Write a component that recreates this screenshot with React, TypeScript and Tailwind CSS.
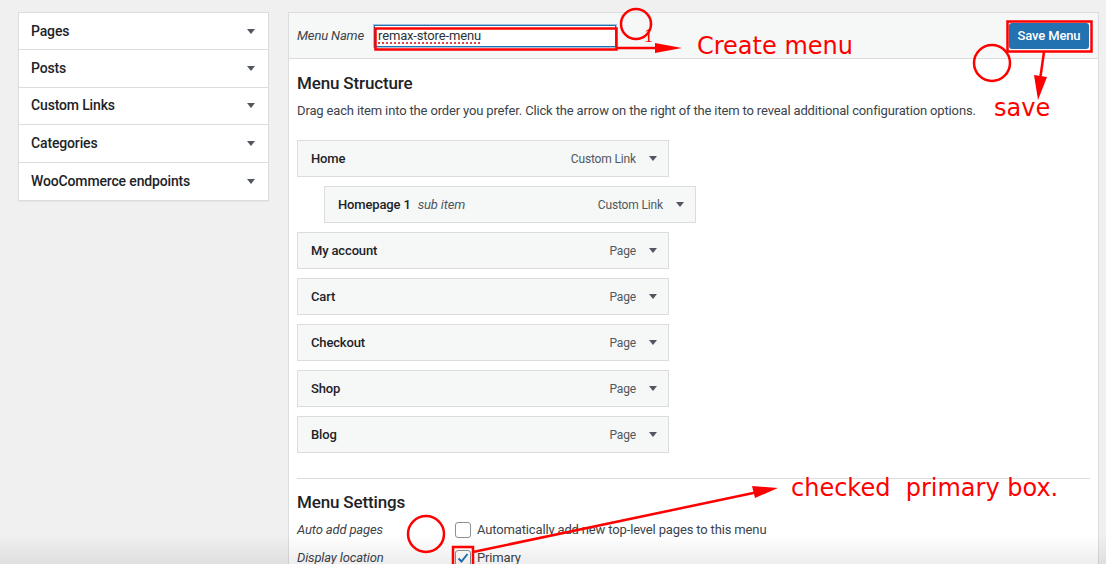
import React from "react";

const sections = ["Pages", "Posts", "Custom Links", "Categories", "WooCommerce endpoints"];

const items = [
  { title: "Home", type: "Custom Link" },
  { title: "Homepage 1", type: "Custom Link", sub: true },
  { title: "My account", type: "Page" },
  { title: "Cart", type: "Page" },
  { title: "Checkout", type: "Page" },
  { title: "Shop", type: "Page" },
  { title: "Blog", type: "Page" },
];

function Caret() {
  return (
    <svg width="8" height="5" viewBox="0 0 8 5" className="shrink-0">
      <polygon points="0,0 8,0 4,5" fill="#50575e" />
    </svg>
  );
}

function LeftPanel() {
  return (
    <div className="w-[251px] bg-white border border-[#dcdcde] shadow-[0_1px_1px_rgba(0,0,0,0.04)]">
      {sections.map((s, i) => (
        <div
          key={s}
          className={
            "h-[37.4px] flex items-center justify-between pl-[12px] pr-[13px] text-[14px] font-medium text-[#1d2327] " +
            (i < sections.length - 1 ? "border-b border-[#dcdcde]" : "")
          }
        >
          <span>{s}</span>
          <Caret />
        </div>
      ))}
    </div>
  );
}

function MenuItem({ title, type, sub }: { title: string; type: string; sub?: boolean }) {
  return (
    <div
      className={
        "w-[372px] h-[37px] flex items-center justify-between pl-[13px] pr-[11px] bg-[#f6f7f7] border border-[#dcdcde] " +
        (sub ? "ml-[27px]" : "")
      }
    >
      <div className="flex items-center gap-[7px]">
        <span className="text-[13px] font-medium text-[#1d2327]">{title}</span>
        {sub && <span className="text-[13px] italic text-[#50575e]">sub item</span>}
      </div>
      <div className="flex items-center gap-[13px]">
        <span className="text-[12px] text-[#50575e]">{type}</span>
        <Caret />
      </div>
    </div>
  );
}

function Checkbox({ checked }: { checked?: boolean }) {
  return (
    <span className="w-[16px] h-[16px] shrink-0 flex items-center justify-center bg-white border border-[#8c8f94] rounded-[3px]">
      {checked && (
        <svg width="14" height="14" viewBox="0 0 14 14">
          <path d="M2.5 7.5 L5.5 10.5 L11.5 3" fill="none" stroke="#2271b1" strokeWidth="2" />
        </svg>
      )}
    </span>
  );
}

function RightPanel() {
  return (
    <div className="w-[811px] h-[600px] bg-white border border-[#dcdcde]">
      {/* header */}
      <div className="h-[46px] flex items-center justify-between pl-[8px] pr-[9px] bg-[#f6f7f7] border-b border-[#dcdcde]">
        <div className="flex items-center">
          <span className="w-[77px] text-[13px] italic text-[#3c434a]">Menu Name</span>
          <div className="w-[242px] h-[22px] flex items-center px-[3px] bg-white border border-[#2271b1] shadow-[0_0_0_1px_rgba(34,113,177,0.4)]">
            <span className="text-[13px] text-[#2c3338] underline decoration-dotted decoration-[#e34040] decoration-[1.5px] underline-offset-[3px]">
              remax-store-menu
            </span>
          </div>
        </div>
        <button className="w-[80px] h-[26px] bg-[#2271b1] rounded-[3px] text-white text-[13px] font-medium">
          Save Menu
        </button>
      </div>

      {/* body */}
      <div className="px-[8px] pt-[14px]">
        <h3 className="text-[17px] leading-[20px] font-medium text-[#1d2327]">Menu Structure</h3>
        <p className="mt-[9px] text-[13px] leading-[18px] text-[#3c434a]">
          Drag each item into the order you prefer. Click the arrow on the right of the item to reveal additional
          configuration options.
        </p>
        <div className="mt-[20px] flex flex-col gap-[9px]">
          {items.map((it) => (
            <MenuItem key={it.title} {...it} />
          ))}
        </div>
        <div className="mt-[25px] border-t border-[#dcdcde]" />
        <h3 className="mt-[13px] text-[17px] leading-[20px] font-medium text-[#1d2327]">Menu Settings</h3>
        <div className="mt-[4px]">
          <div className="h-[28px] flex items-center">
            <span className="w-[158px] text-[13px] italic text-[#3c434a]">Auto add pages</span>
            <Checkbox />
            <span className="ml-[6px] text-[13px] text-[#3c434a]">
              Automatically add new top-level pages to this menu
            </span>
          </div>
          <div className="h-[28px] flex items-center">
            <span className="w-[158px] text-[13px] italic text-[#3c434a]">Display location</span>
            <Checkbox checked />
            <span className="ml-[6px] text-[13px] text-[#3c434a]">Primary</span>
          </div>
        </div>
      </div>
    </div>
  );
}

function Annotations() {
  const red = "#ff0000";
  const txt = { fontFamily: "'DejaVu Sans', sans-serif", fontSize: 24, fill: red, letterSpacing: 0 } as const;
  return (
    <svg className="absolute inset-0 pointer-events-none" width="1106" height="564" viewBox="0 0 1106 564">
      {/* input highlight + step 1 */}
      <rect x="375.5" y="28.5" width="241" height="21" fill="none" stroke={red} strokeWidth="2.5" />
      <circle cx="636" cy="24" r="15" fill="none" stroke={red} strokeWidth="2.5" />
      <text x="644" y="42" style={{ fontFamily: "'Liberation Serif', serif", fontSize: 18, fill: red, letterSpacing: 0 }}>1</text>
      <line x1="617" y1="48" x2="660" y2="48" stroke={red} strokeWidth="2.5" />
      <polygon points="655,43 682,48 655,53" fill={red} />
      <text x="697" y="54" style={txt}>Create menu</text>

      {/* save button */}
      <rect x="1007.5" y="21.5" width="84" height="30" fill="none" stroke={red} strokeWidth="2.5" />
      <circle cx="992" cy="63" r="18" fill="none" stroke={red} strokeWidth="2.5" />
      <line x1="1044" y1="52" x2="1040" y2="80" stroke={red} strokeWidth="2.5" />
      <polygon points="1034,75 1047,77 1038,100" fill={red} />
      <text x="994" y="116" style={txt}>save</text>

      {/* primary checkbox */}
      <circle cx="426" cy="534" r="18" fill="none" stroke={red} strokeWidth="2.5" />
      <rect x="453" y="547" width="20" height="20" fill="none" stroke={red} strokeWidth="2.5" />
      <line x1="473" y1="552" x2="758" y2="492" stroke={red} strokeWidth="2.5" />
      <polygon points="752,486 778,488 755,498" fill={red} />
      <text x="791" y="496" style={txt} xmlSpace="preserve">checked  primary box.</text>
    </svg>
  );
}

export default function App() {
  return (
    <div className="relative w-[1106px] h-[564px] overflow-hidden bg-[#f0f0f1] font-[Roboto,sans-serif] tracking-[-0.15px] text-[#1d2327]">
      <div className="flex items-start gap-[19px] pl-[18px] pt-[12px]">
        <LeftPanel />
        <RightPanel />
      </div>
      {/* screenshot bottom fade */}
      <div className="absolute left-0 right-0 bottom-0 h-[30px] bg-linear-to-b from-transparent to-black/[0.07] pointer-events-none" />
      <Annotations />
    </div>
  );
}
